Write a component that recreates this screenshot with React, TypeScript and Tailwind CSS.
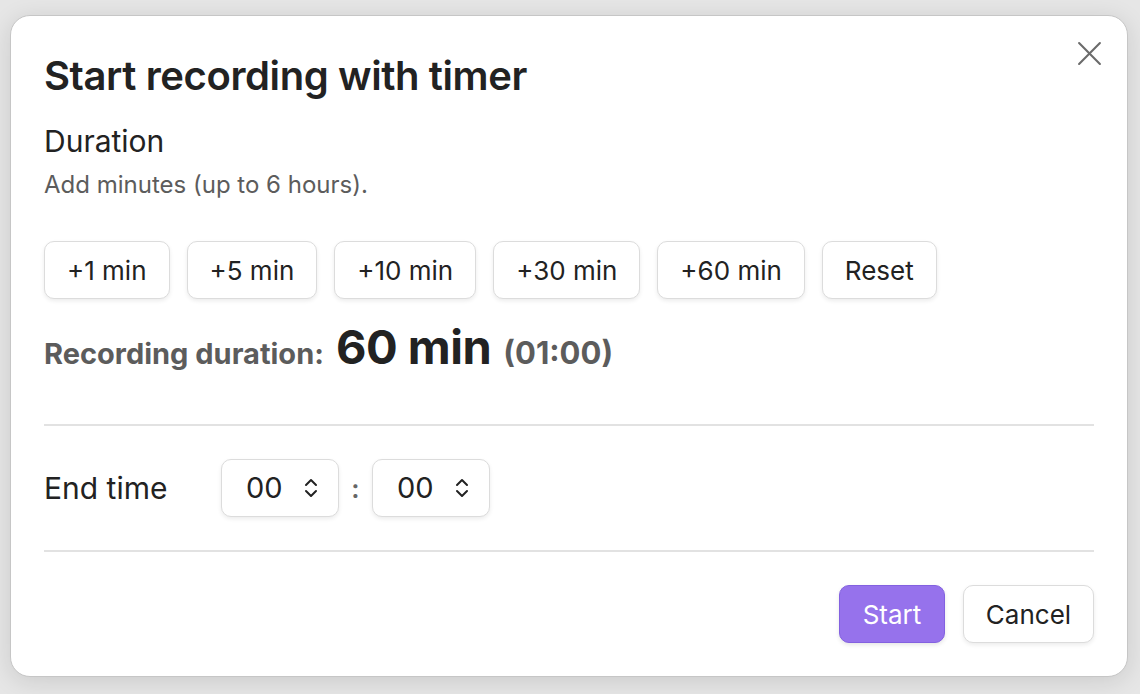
import { type SVGProps } from "react";

const ADD_BUTTONS = ["+1 min", "+5 min", "+10 min", "+30 min", "+60 min", "Reset"];

const FONT = { fontFamily: "Inter, 'Noto Sans', sans-serif" };

export default function App() {
  return (
    <div
      className="w-[1140px] h-[694px] bg-[#e6e6e6] pt-[15px] pl-[10px] overflow-hidden"
      style={FONT}
    >
      <div className="relative w-[1118px] h-[662px] rounded-[20px] border border-[#c6c6c6] bg-white shadow-[0_4px_24px_rgba(0,0,0,0.12)] px-[33px] pt-[33px] text-[#222]">
        {/* Close */}
        <button className="absolute top-[23px] right-[24px] w-[28px] h-[28px] flex items-center justify-center text-[#6b6b6b]">
          <IcoClose className="w-[25px] h-[25px]" />
        </button>

        {/* Title */}
        <h1 className="text-[40px] leading-[54px] font-semibold tracking-[-0.01em] text-[#222]">
          Start recording with timer
        </h1>

        {/* Duration */}
        <div className="mt-[18px] text-[30px] leading-[40px] text-[#222]">Duration</div>
        <div className="mt-[9px] text-[24px] leading-[30px] text-[#5c5c5c]">
          Add minutes (up to 6 hours).
        </div>

        <div className="mt-[41px] flex gap-[17px]">
          {ADD_BUTTONS.map((label) => (
            <button
              key={label}
              className="h-[58px] px-[22px] rounded-[10px] border border-[#dcdcdc] bg-white shadow-[0_2px_4px_rgba(0,0,0,0.08)] text-[26px] text-[#222]"
            >
              {label}
            </button>
          ))}
        </div>

        <div className="mt-[20px] h-[56px] leading-[56px] flex items-baseline gap-[12px]">
          <span className="text-[29px] font-bold text-[#5c5c5c]">Recording duration:</span>
          <span className="text-[47px] font-bold text-[#222] tracking-[-0.01em]">60 min</span>
          <span className="text-[31px] font-bold text-[#5c5c5c]">(01:00)</span>
        </div>

        <div className="mt-[49px] h-[2px] bg-[#e2e2e2]" />

        {/* End time */}
        <div className="h-[124px] flex items-center">
          <span className="w-[177px] text-[30px] text-[#222]">End time</span>
          <TimeSelect value="00" />
          <span className="w-[33px] text-center text-[26px] font-semibold text-[#666]">:</span>
          <TimeSelect value="00" />
        </div>

        <div className="h-[2px] bg-[#e2e2e2]" />

        {/* Footer */}
        <div className="mt-[33px] flex justify-end gap-[18px]">
          <button className="h-[58px] w-[106px] rounded-[10px] border border-[#8361e0] bg-[#9672ec] text-white text-[26px] shadow-[0_2px_4px_rgba(0,0,0,0.1)]">
            Start
          </button>
          <button className="h-[58px] w-[131px] rounded-[10px] border border-[#dcdcdc] bg-white text-[#222] text-[26px] shadow-[0_2px_4px_rgba(0,0,0,0.08)]">
            Cancel
          </button>
        </div>
      </div>
    </div>
  );
}

function TimeSelect({ value }: { value: string }) {
  return (
    <div className="w-[118px] h-[58px] rounded-[10px] border border-[#dcdcdc] bg-white shadow-[0_2px_4px_rgba(0,0,0,0.08)] flex items-center pl-[24px] pr-[19px] justify-between">
      <span className="text-[29px] text-[#222]">{value}</span>
      <IcoUpDown className="w-[16px] h-[24px] text-[#222]" />
    </div>
  );
}

/* ── Icons ── */
function IcoClose(p: SVGProps<SVGSVGElement>) {
  return <svg {...p} viewBox="0 0 24 24" fill="none" stroke="currentColor" strokeWidth="2" strokeLinecap="round"><path d="M2 2l20 20M22 2L2 22"/></svg>;
}
function IcoUpDown(p: SVGProps<SVGSVGElement>) {
  return <svg {...p} viewBox="0 0 16 24" fill="none" stroke="currentColor" strokeWidth="2" strokeLinecap="round" strokeLinejoin="round"><path d="M3 9l5-5 5 5M3 15l5 5 5-5"/></svg>;
}
